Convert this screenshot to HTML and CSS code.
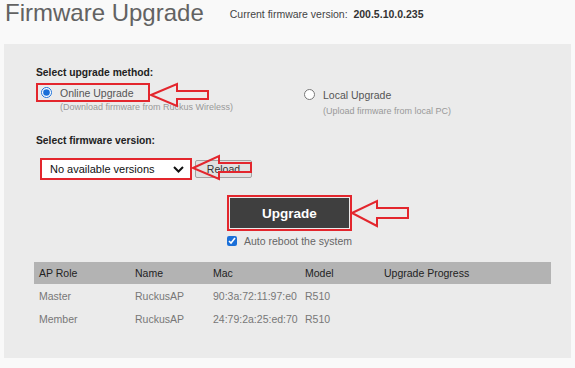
FILE: index.html
```html
<!DOCTYPE html>
<html lang="en">
<head>
    <meta charset="UTF-8">
    <title>Firmware Upgrade</title>
    <link rel="stylesheet" href="styles.css">
</head>
<body>
    <div class="head">
        <h1>Firmware Upgrade</h1>
        <div class="current">Current firmware version:&nbsp; <b>200.5.10.0.235</b></div>
    </div>

    <section class="panel">
        <h3>Select upgrade method:</h3>
        <div class="methods">
            <div class="method">
                <label class="option marked"><input type="radio" name="method" checked>Online Upgrade</label>
                <div class="hint">(Download firmware from Ruckus Wireless)</div>
            </div>
            <div class="method">
                <label class="option"><input type="radio" name="method">Local Upgrade</label>
                <div class="hint">(Upload firmware from local PC)</div>
            </div>
        </div>

        <h3>Select firmware version:</h3>
        <div class="versions">
            <div class="select">
                <span>No available versions</span>
                <svg width="11" height="7" viewBox="0 0 11 7"><path d="M1 1 L5.5 5.5 L10 1" fill="none" stroke="#111" stroke-width="2"/></svg>
            </div>
            <button class="reload">Reload</button>
        </div>

        <div class="go">
            <div class="frame"><button class="upgrade">Upgrade</button></div>
            <label class="auto"><input type="checkbox" checked>Auto reboot the system</label>
        </div>

        <table class="aps">
            <colgroup>
                <col style="width:96px"><col style="width:78px"><col style="width:92px"><col style="width:79px"><col>
            </colgroup>
            <tr><th>AP Role</th><th>Name</th><th>Mac</th><th>Model</th><th>Upgrade Progress</th></tr>
            <tr><td>Master</td><td>RuckusAP</td><td>90:3a:72:11:97:e0</td><td>R510</td><td></td></tr>
            <tr><td>Member</td><td>RuckusAP</td><td>24:79:2a:25:ed:70</td><td>R510</td><td></td></tr>
        </table>
    </section>

    <!-- annotation arrows drawn over the page -->
    <svg class="notes" width="575" height="368" viewBox="0 0 575 368">
        <polygon points="151,95 177,84 177,91 208,91 208,99 177,99 177,106"/>
        <polygon points="193,168 219,156 219,163 251,163 251,172 219,172 219,179"/>
        <polygon points="352,213 377,201 377,208 408,208 408,218 377,218 377,226"/>
    </svg>
</body>
</html>
```

FILE: styles.css
```css
body {
    margin: 0;
    height: 368px;
    overflow: hidden;
    position: relative;
    background: #f9f9f9;
    font-family: "Liberation Sans", Arial, sans-serif;
    font-size: 10.5px;
    color: #555;
}

.head {
    display: flex;
    align-items: flex-start;
    height: 44px;
    padding-left: 5px;
}
h1 {
    margin: 0;
    font-size: 24px;
    line-height: 26px;
    font-weight: normal;
    color: #626262;
}
.current {
    margin: 7px 0 0 26px;
    line-height: 14px;
    color: #444;
}
.current b {
    color: #333;
}

.panel {
    margin: 0 4px;
    height: 314px;
    box-sizing: border-box;
    padding: 22px 0 0 30px;
    background: #ebebeb;
}
h3 {
    margin: 0 0 0 2px;
    font-size: 10.3px;
    line-height: 14px;
    color: #222;
}

.methods {
    display: grid;
    grid-template-columns: 263px auto;
    margin: 3px 0 0 2px;
}
.option {
    display: flex;
    align-items: center;
    gap: 8px;
    height: 19px;
    padding: 0 0 0 3px;
    border: 2px solid transparent;
    font-size: 10.5px;
    color: #555;
}
.option.marked {
    width: 114px;
    box-sizing: border-box;
    border-color: #e3262d;
}
.option input {
    margin: 0;
    width: 11px;
    height: 11px;
    accent-color: #1a6fd8;
}
.hint {
    padding-left: 24px;
    font-size: 9px;
    line-height: 10px;
    color: #999;
}
.methods + h3 {
    margin-top: 18px;
}

.versions {
    display: flex;
    align-items: center;
    margin: 10px 0 0 6px;
}
.select {
    display: flex;
    align-items: center;
    width: 152px;
    height: 22px;
    box-sizing: border-box;
    padding: 0 6px 0 8px;
    border: 2px solid #e3262d;
    background: #fff;
    font-size: 11px;
    color: #111;
}
.select svg {
    margin-left: auto;
}
.reload {
    margin-left: 3px;
    width: 57px;
    height: 18px;
    padding: 0;
    border: 1px solid #a3a3a3;
    border-radius: 2px;
    background: #e1e1e1;
    font-family: inherit;
    font-size: 10.5px;
    color: #333;
}

.go {
    margin: 15px 0 0 193px;
}
.frame {
    width: 125px;
    box-sizing: border-box;
    padding: 1px;
    border: 2px solid #e3262d;
}
.upgrade {
    display: block;
    width: 100%;
    height: 30px;
    border: 0;
    background: #3f3f3f;
    color: #fff;
    font-family: inherit;
    font-weight: bold;
    font-size: 13.5px;
}
.auto {
    display: flex;
    align-items: center;
    gap: 7px;
    margin-top: 4px;
    line-height: 12px;
    color: #666;
}
.auto input {
    margin: 0;
    width: 10px;
    height: 10px;
    accent-color: #1a6fd8;
}

.aps {
    margin-top: 15px;
    width: 517px;
    border-collapse: collapse;
    table-layout: fixed;
}
.aps th {
    height: 22px;
    padding: 0 0 0 5px;
    background: #b3b3b3;
    text-align: left;
    font-weight: normal;
    color: #222;
}
.aps td {
    height: 23px;
    padding: 0 0 0 5px;
    color: #777;
}

.notes {
    position: absolute;
    left: 0;
    top: 0;
    pointer-events: none;
}
.notes polygon {
    fill: none;
    stroke: #e3262d;
    stroke-width: 2;
}
```
